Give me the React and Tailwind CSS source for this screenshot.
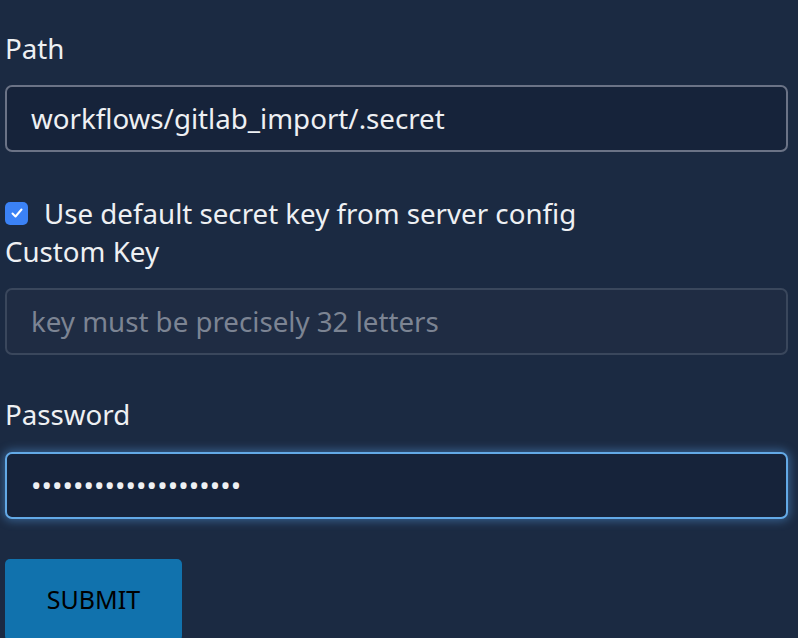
export default function App() {
  return (
    <div className="min-h-[638px] w-[798px] overflow-hidden bg-[#1b2a42] text-[#eef0f3]" style={{ fontFamily: '"Noto Sans", "Open Sans", sans-serif' }}>
      <div className="flex flex-col px-[5px] pt-[30px] text-[27.7px]">
        <label className="leading-[36px]">Path</label>
        <div className="mt-[19px] flex h-[67px] w-[783px] items-center rounded-[7px] border-2 border-[#6b7386] bg-[#16233a] px-[24px]">
          <span>workflows/gitlab_import/.secret</span>
        </div>
        <div className="mt-[43px] flex items-center gap-[16px] leading-[36px]">
          <span className="flex h-[23px] w-[23px] items-center justify-center rounded-[5px] bg-[#3b82f6]">
            <svg width="14" height="14" viewBox="0 0 14 14" fill="none"><path d="M2.5 7.5 L5.5 10.5 L11.5 3.5" stroke="white" strokeWidth="2" strokeLinecap="round" strokeLinejoin="round" /></svg>
          </span>
          <span>Use default secret key from server config</span>
        </div>
        <label className="mt-[2px] leading-[36px]">Custom Key</label>
        <div className="mt-[19px] flex h-[67px] w-[783px] items-center rounded-[7px] border-2 border-[#3a475c] bg-[#1f2c43] px-[24px]">
          <span className="text-[#7c8493]">key must be precisely 32 letters</span>
        </div>
        <label className="mt-[41px] leading-[36px]">Password</label>
        <div className="mt-[20px] flex h-[67px] w-[783px] items-center rounded-[7px] border-2 border-[#63a9e6] bg-[#16233a] px-[24px] shadow-[0_0_10px_2px_rgba(88,160,230,0.45)]">
          <span className="tracking-[0.1px]">••••••••••••••••••••</span>
        </div>
        <button className="mt-[40px] h-[82px] w-[177px] rounded-[5px] bg-[#1172ad] text-[25px] text-black">SUBMIT</button>
      </div>
    </div>
  );
}
